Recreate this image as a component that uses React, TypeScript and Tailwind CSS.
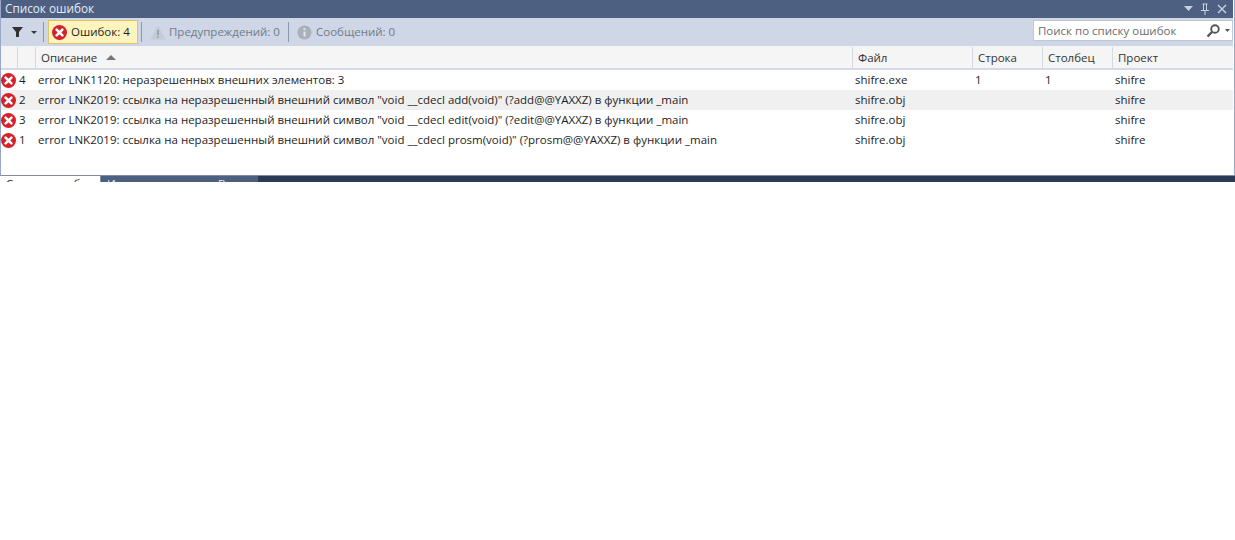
const rows = [
  { n: "4", text: "error LNK1120: неразрешенных внешних элементов: 3", file: "shifre.exe", line: "1", col: "1" },
  { n: "2", text: 'error LNK2019: ссылка на неразрешенный внешний символ "void __cdecl add(void)" (?add@@YAXXZ) в функции _main', file: "shifre.obj", line: "", col: "" },
  { n: "3", text: 'error LNK2019: ссылка на неразрешенный внешний символ "void __cdecl edit(void)" (?edit@@YAXXZ) в функции _main', file: "shifre.obj", line: "", col: "" },
  { n: "1", text: 'error LNK2019: ссылка на неразрешенный внешний символ "void __cdecl prosm(void)" (?prosm@@YAXXZ) в функции _main', file: "shifre.obj", line: "", col: "" },
]

function ErrorIcon() {
  return (
    <svg width="15" height="15" viewBox="0 0 15 15" className="shrink-0">
      <circle cx="7.5" cy="7.5" r="7.5" fill="#d8202a" />
      <path d="M4.6 4.6l5.8 5.8M10.4 4.6l-5.8 5.8" stroke="#fff" strokeWidth="2.6" strokeLinecap="round" />
    </svg>
  )
}

function Sep() {
  return <div className="h-[20px] w-px bg-[#8c97ab]" />
}

export default function App() {
  return (
    <div className="h-[182px] overflow-hidden bg-white text-[11.5px] text-[#1e1e1e] [font-family:'Open_Sans','Noto_Sans',sans-serif]">
      <div className="flex h-[176px] flex-col border-x border-b border-x-[#9aa8c8] border-b-[#7f8ca8] pr-px">
        <div className="flex h-[18px] shrink-0 items-center justify-between bg-[#4d6082] pb-[1px] pl-[4px] pr-[6px] text-[11.75px] text-[#e8ecf3]">
          <span className="leading-[17px]">Список ошибок</span>
          <div className="flex items-center gap-[7px]">
            <svg width="9" height="5" viewBox="0 0 9 5"><path d="M0 0h9L4.5 5z" fill="#c9d1e0" /></svg>
            <svg width="10" height="12" viewBox="0 0 10 12" fill="none" stroke="#c9d1e0">
              <path d="M2.5 1h5M3.5 1v6M6.5 1v6M1 7.5h8M5 8v4" />
            </svg>
            <svg width="10" height="10" viewBox="0 0 10 10" stroke="#c9d1e0" strokeWidth="1.4">
              <path d="M1 1l8 8M9 1l-8 8" />
            </svg>
          </div>
        </div>

        <div className="flex h-[28px] shrink-0 items-center bg-[#cfd6e5]">
          <div className="flex w-[42px] items-center justify-end gap-[8px] pr-[6px]">
            <svg width="11" height="10" viewBox="0 0 11 10"><path d="M0 0h11L7 5v5H4V5z" fill="#333" /></svg>
            <svg width="6" height="3" viewBox="0 0 6 3"><path d="M0 0h6L3 3z" fill="#333" /></svg>
          </div>
          <Sep />
          <div className="ml-[4px] mr-[3px] flex h-[24px] w-[90px] items-center gap-[4px] border border-[#e5c365] bg-[#fdf4bf] pl-[3px]">
            <ErrorIcon />
            <span>Ошибок: 4</span>
          </div>
          <Sep />
          <div className="flex w-[146px] items-center gap-[3px] pl-[8px] text-[#717b8c]">
            <svg width="16" height="15" viewBox="0 0 16 15" className="shrink-0">
              <path d="M8 0.5L15.5 14.5H0.5z" fill="#c4cad6" />
              <path d="M8 5v5M8 11.2v1.6" stroke="#8f96a3" strokeWidth="1.4" />
            </svg>
            <span>Предупреждений: 0</span>
          </div>
          <Sep />
          <div className="flex items-center gap-[4px] pl-[8px] text-[#717b8c]">
            <svg width="15" height="15" viewBox="0 0 15 15" className="shrink-0">
              <circle cx="7.5" cy="7.5" r="7" fill="#a9afbb" />
              <path d="M7.5 3.2v1.8M7.5 6.4v5.2" stroke="#e6e8ee" strokeWidth="2" />
            </svg>
            <span>Сообщений: 0</span>
          </div>
          <div className="mb-[3px] ml-auto flex h-[21px] w-[200px] items-center justify-between border border-[#c0c8d8] bg-white pl-[4px] pr-[2px] text-[#6d6d6d]">
            <span>Поиск по списку ошибок</span>
            <div className="flex items-center gap-[5px]">
              <svg width="14" height="14" viewBox="0 0 14 14" fill="none" stroke="#555">
                <circle cx="9" cy="5" r="3.8" strokeWidth="1.9" />
                <path d="M6 8L1.5 12.5" strokeWidth="2.4" />
              </svg>
              <svg width="5" height="3" viewBox="0 0 5 3"><path d="M0 0h5L2.5 3z" fill="#555" /></svg>
            </div>
          </div>
        </div>

        <div className="flex h-[24px] shrink-0 items-center border-b-2 border-[#d5d9e6] bg-[#f5f5f5] pt-[1px] text-[#333]">
          <div className="h-full w-[17px] border-r border-[#d5d9e6]" />
          <div className="h-full w-[18px] border-r border-[#d5d9e6]" />
          <div className="flex h-full w-[817px] items-center gap-[9px] border-r border-[#d5d9e6] pl-[5px]">
            <span>Описание</span>
            <svg width="10" height="5" viewBox="0 0 10 5"><path d="M5 0l5 5H0z" fill="#777" /></svg>
          </div>
          <div className="flex h-full w-[120px] items-center border-r border-[#d5d9e6] pl-[5px]">Файл</div>
          <div className="flex h-full w-[70px] items-center border-r border-[#d5d9e6] pl-[5px]">Строка</div>
          <div className="flex h-full w-[70px] items-center border-r border-[#d5d9e6] pl-[5px]">Столбец</div>
          <div className="flex h-full flex-1 items-center pl-[5px]">Проект</div>
        </div>

        {rows.map((row, i) => (
          <div key={row.n} className={`flex h-[20px] shrink-0 items-center ${i === 1 ? "bg-[#f0f0f0]" : "bg-white"}`}>
            <div className="flex w-[17px]"><ErrorIcon /></div>
            <div className="w-[18px] pl-[1px]">{row.n}</div>
            <div className="w-[817px] truncate pl-[2px]">{row.text}</div>
            <div className="w-[120px] pl-[2px]">{row.file}</div>
            <div className="w-[70px] pl-[2px]">{row.line}</div>
            <div className="w-[70px] pl-[2px]">{row.col}</div>
            <div className="flex-1 pl-[2px]">shifre</div>
          </div>
        ))}
      </div>

      <div className="flex h-[6px] overflow-hidden">
        <div className="w-[100px] pl-[6px] leading-[16px]">Список ошибок</div>
        <div className="flex flex-1 bg-[#2b3a55]">
          <div className="flex w-[158px] border-l border-[#7f8ca8] bg-[#4d6082] pl-[6px] leading-[16px] text-[#e8ecf3]">
            <span className="w-[111px]">Изменения</span>
            <span>Вывод</span>
          </div>
        </div>
      </div>
    </div>
  )
}
